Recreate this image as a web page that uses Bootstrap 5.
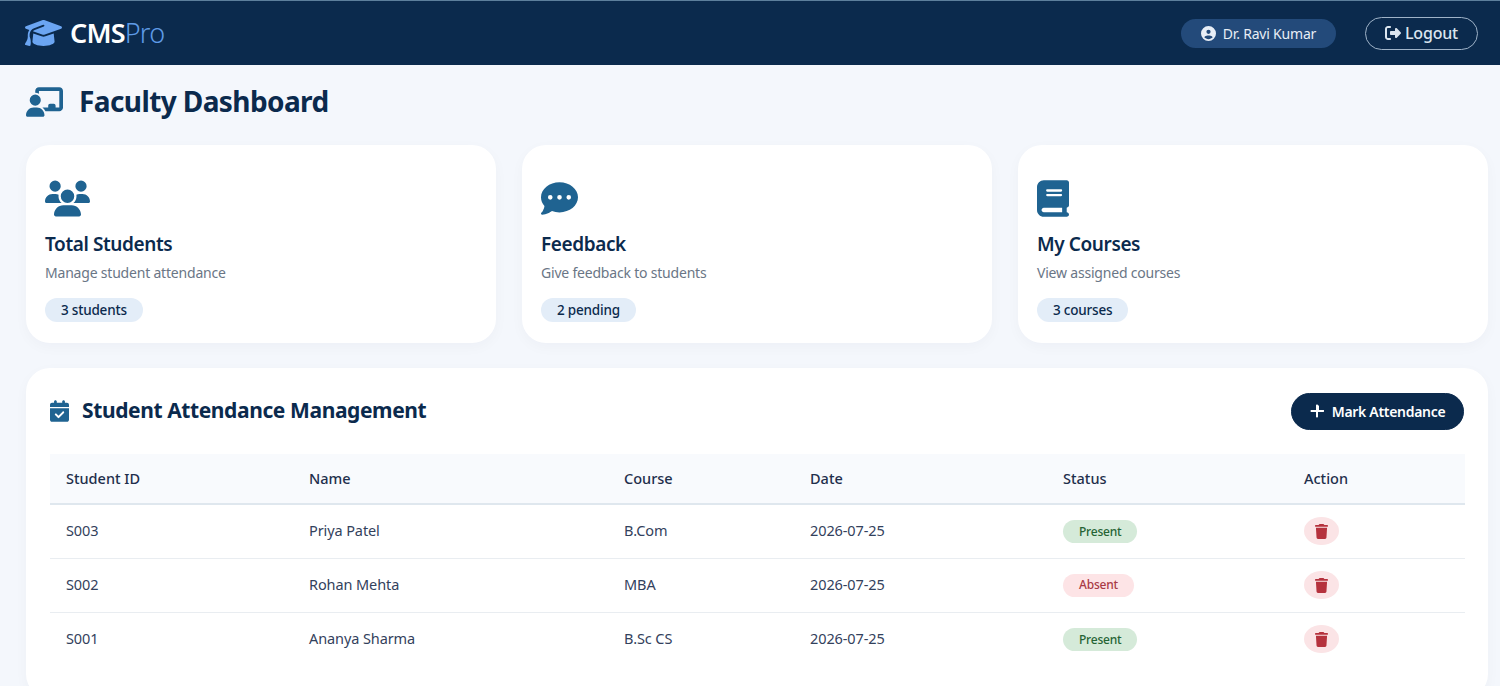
<!DOCTYPE html>
<html lang="en">
<head>
    <meta charset="UTF-8">
    <meta name="viewport" content="width=device-width, initial-scale=1.0">
    <title>Faculty Dashboard - CMSPro</title>
    <link href="https://cdn.jsdelivr.net/npm/bootstrap@5.3.0/dist/css/bootstrap.min.css" rel="stylesheet">
    <style>
        html, body { height: 100vh; overflow: hidden; }
        body {
            font-family: "Noto Sans", "Open Sans", sans-serif;
            background: #f4f7fc;
            color: #0b2a4d;
        }
        .ico { fill: currentColor; display: block; flex: none; }
        .cms-nav {
            height: 65px;
            background: #0b2a4d;
            border-top: 1px solid #5d7f9c;
            padding: 0 22px 0 25px;
        }
        .cms-logo { color: #fff; font-size: 27px; font-weight: 600; letter-spacing: -.8px; gap: 8px; text-decoration: none; }
        .cms-logo .ico { color: #6ba5f2; }
        .cms-logo span span { color: #5f9be6; font-weight: 300; }
        .user-pill {
            height: 29px;
            width: 155px;
            background: #234a7a;
            color: #e8eef6;
            font-size: 14px;
            gap: 7px;
            margin-right: 29px;
            letter-spacing: -.2px;
        }
        .btn-logout {
            --bs-btn-color: #dbe5ef;
            --bs-btn-border-color: #9fb3c8;
            --bs-btn-hover-color: #fff;
            --bs-btn-hover-border-color: #fff;
            --bs-btn-hover-bg: transparent;
            --bs-btn-border-radius: 17px;
            width: 113px;
            height: 33px;
            padding: 0;
            font-size: 16px;
            font-weight: 500;
            gap: 4px;
            letter-spacing: -.2px;
        }
        .page-wrap { padding: 0 12px 0 26px; }
        .page-title { height: 80px; gap: 16px; margin: 0; font-size: 28px; font-weight: 700; letter-spacing: -.6px; padding-bottom: 6px; }
        .page-title .ico, .stat-ico, .panel-title .ico { color: #1f6391; }
        .stat-row { --bs-gutter-x: 26px; margin-bottom: 25px; }
        .stat-box {
            height: 198px;
            background: #fff;
            border: 0;
            border-radius: 24px;
            padding: 35px 19px 0;
            box-shadow: 0 4px 14px rgba(11, 42, 77, .03);
        }
        .stat-ico { height: 37px; margin-bottom: 14px; }
        .stat-box h5 { font-size: 19px; font-weight: 600; letter-spacing: -.4px; margin: 0 0 5px; line-height: 26px; color: #0b2a4d; }
        .stat-box p { font-size: 14px; color: #6a7686; margin: 0 0 14px; line-height: 21px; letter-spacing: -.2px; }
        .stat-tag {
            height: 24px;
            padding: 0 16px;
            background: #e3edf8;
            color: #0b2a4d;
            font-size: 13.5px;
            font-weight: 500;
            letter-spacing: -.2px;
        }
        .panel-box {
            height: 330px;
            background: #fff;
            border: 0;
            border-radius: 24px;
            padding: 24px 24px 0;
            box-shadow: 0 4px 14px rgba(11, 42, 77, .03);
        }
        .panel-head { height: 62px; margin-bottom: 0; padding-bottom: 24px; height: 62px; }
        .panel-title { font-size: 21px; font-weight: 700; margin: 0; gap: 13px; letter-spacing: -.4px; padding-left: 0; }
        .btn-mark {
            --bs-btn-bg: #0b2a4d;
            --bs-btn-color: #fff;
            --bs-btn-border-color: #0b2a4d;
            --bs-btn-hover-bg: #16406f;
            --bs-btn-hover-border-color: #16406f;
            --bs-btn-hover-color: #fff;
            --bs-btn-border-radius: 19px;
            width: 173px;
            height: 37px;
            padding: 0;
            font-size: 14px;
            font-weight: 600;
            gap: 8px;
            letter-spacing: -.3px;
        }
        .att-table { table-layout: fixed; margin: 0; width: 1415px; --bs-table-color: #33415c; color: #33415c; }
        .att-table th {
            height: 50px;
            padding: 0 16px;
            background: #f8fafd;
            border-bottom: 2px solid #dfe7ee;
            font-size: 14.5px;
            font-weight: 500;
            color: #1f2f4c;
            vertical-align: middle;
        }
        .att-table td {
            height: 54px;
            padding: 0 16px;
            font-size: 14.5px;
            color: #33415c;
            vertical-align: middle;
            border-bottom: 1px solid #e9edf1;
            letter-spacing: -.1px;
        }
        .att-table tr:last-child td { border-bottom: 0; }
        .c-id { width: 243px; } .c-name { width: 315px; } .c-course { width: 186px; }
        .c-date { width: 253px; } .c-status { width: 241px; } .c-act { width: 177px; }
        .state-tag { height: 23px; padding: 0 16px; font-size: 12px; font-weight: 500; letter-spacing: -.2px; }
        .state-ok { background: #d5ead9; color: #256435; }
        .state-no { background: #fde4e6; color: #a93a45; }
        .btn-del {
            --bs-btn-bg: #fbe4e6;
            --bs-btn-color: #b5323d;
            --bs-btn-border-color: transparent;
            --bs-btn-hover-bg: #f6cfd3;
            --bs-btn-hover-color: #b5323d;
            --bs-btn-hover-border-color: transparent;
            --bs-btn-border-radius: 50%;
            width: 35px;
            height: 28px;
            padding: 0;
        }
    </style>
</head>
<body>
    <svg width="0" height="0" class="position-absolute">
        <symbol id="i-cap" viewBox="0 0 640 512"><path d="M320 32c-8.1 0-16.1 1.4-23.7 4.1L15.8 137.4C6.3 140.9 0 149.9 0 160s6.3 19.1 15.8 22.6l57.9 20.9C57.3 229.3 48 259.8 48 291.9v28.1c0 28.4-10.8 57.7-22.3 80.8c-6.5 13-13.9 25.8-22.5 37.6C0 442.7-.9 448.3 .9 453.4s6 8.9 11.2 10.2l64 16c4.2 1.1 8.7 .3 12.4-2s6.3-6.1 7.1-10.4c8.6-42.8 4.3-81.2-2.1-108.7C90.3 344.3 86 329.8 80 316.5V291.9c0-30.2 10.2-58.7 27.9-81.5c12.9-15.5 29.6-28 49.2-35.7l157-61.7c8.2-3.2 17.5 .8 20.7 9s-.8 17.5-9 20.7l-157 61.7c-12.4 4.9-23.3 12.4-32.2 21.6l159.6 57.6c7.6 2.7 15.6 4.1 23.7 4.1s16.1-1.4 23.7-4.1L624.2 182.6c9.5-3.4 15.8-12.5 15.8-22.6s-6.3-19.1-15.8-22.6L343.7 36.1C336.1 33.4 328.1 32 320 32zM128 408c0 35.3 86 72 192 72s192-36.7 192-72L496.7 262.6 354.5 314c-11.1 4-22.8 6-34.5 6s-23.5-2-34.5-6L143.3 262.6 128 408z"/></symbol>
        <symbol id="i-board" viewBox="0 0 640 512"><path d="M160 64c0-35.3 28.7-64 64-64H576c35.3 0 64 28.7 64 64V352c0 35.3-28.7 64-64 64H336.8c-11.8-25.5-29.9-47.5-52.4-64H384V320c0-17.7 14.3-32 32-32h64c17.7 0 32 14.3 32 32v32h64V64L224 64v49.1C205.2 102.2 183.3 96 160 96V64zm0 64a96 96 0 1 1 0 192 96 96 0 1 1 0-192zM133.3 352h53.3C260.3 352 320 411.7 320 485.3c0 14.7-11.9 26.7-26.7 26.7H26.7C11.9 512 0 500.1 0 485.3C0 411.7 59.7 352 133.3 352z"/></symbol>
        <symbol id="i-users" viewBox="0 0 640 512"><path d="M144 0a80 80 0 1 1 0 160A80 80 0 1 1 144 0zM512 0a80 80 0 1 1 0 160A80 80 0 1 1 512 0zM0 298.7C0 239.8 47.8 192 106.7 192h42.7c15.9 0 31 3.5 44.6 9.7c-1.3 7.2-1.9 14.7-1.9 22.3c0 38.2 16.8 72.5 43.3 96c-.2 0-.4 0-.7 0H21.3C9.6 320 0 310.4 0 298.7zM405.3 320c-.2 0-.4 0-.7 0c26.6-23.5 43.3-57.8 43.3-96c0-7.6-.7-15-1.9-22.3c13.6-6.3 28.7-9.7 44.6-9.7h42.7C592.2 192 640 239.8 640 298.7c0 11.8-9.6 21.3-21.3 21.3H405.3zM224 224a96 96 0 1 1 192 0 96 96 0 1 1 -192 0zM128 485.3C128 411.7 187.7 352 261.3 352H378.7C452.3 352 512 411.7 512 485.3c0 14.7-11.9 26.7-26.7 26.7H154.7c-14.7 0-26.7-11.9-26.7-26.7z"/></symbol>
        <symbol id="i-dots" viewBox="0 0 512 512"><path d="M256 448c141.4 0 256-93.1 256-208S397.4 32 256 32S0 125.1 0 240c0 45.1 17.7 86.8 47.7 120.9c-1.9 24.5-11.4 46.3-21.4 62.9c-5.5 9.2-11.1 16.6-15.2 21.6c-2.1 2.5-3.7 4.4-4.9 5.7c-.6 .6-1 1.1-1.3 1.4l-.3 .3c-4.6 4.6-5.9 11.4-3.4 17.4c2.5 6 8.3 9.9 14.8 9.9c28.7 0 57.6-8.9 81.6-19.3c22.9-10 42.4-21.9 54.3-30.6c31.8 11.5 67 17.9 104.1 17.9zM128 208a32 32 0 1 1 0 64 32 32 0 1 1 0-64zm128 0a32 32 0 1 1 0 64 32 32 0 1 1 0-64zm96 32a32 32 0 1 1 64 0 32 32 0 1 1 -64 0z"/></symbol>
        <symbol id="i-book" viewBox="0 0 448 512"><path d="M96 0C43 0 0 43 0 96V416c0 53 43 96 96 96H384h32c17.7 0 32-14.3 32-32s-14.3-32-32-32V384c17.7 0 32-14.3 32-32V32c0-17.7-14.3-32-32-32H384 96zm0 384H352v64H96c-17.7 0-32-14.3-32-32s14.3-32 32-32zm32-240c0-8.8 7.2-16 16-16H336c8.8 0 16 7.2 16 16s-7.2 16-16 16H144c-8.8 0-16-7.2-16-16zm16 48H336c8.8 0 16 7.2 16 16s-7.2 16-16 16H144c-8.8 0-16-7.2-16-16s7.2-16 16-16z"/></symbol>
        <symbol id="i-cal" viewBox="0 0 448 512"><path d="M128 0c17.7 0 32 14.3 32 32V64H288V32c0-17.7 14.3-32 32-32s32 14.3 32 32V64h48c26.5 0 48 21.5 48 48v48H0V112C0 85.5 21.5 64 48 64H96V32c0-17.7 14.3-32 32-32zM0 192H448V464c0 26.5-21.5 48-48 48H48c-26.5 0-48-21.5-48-48V192zM329 305c9.4-9.4 9.4-24.6 0-33.9s-24.6-9.4-33.9 0l-95 95-47-47c-9.4-9.4-24.6-9.4-33.9 0s-9.4 24.6 0 33.9l64 64c9.4 9.4 24.6 9.4 33.9 0L329 305z"/></symbol>
        <symbol id="i-user" viewBox="0 0 512 512"><path d="M399 384.2C376.9 345.8 335.4 320 288 320H224c-47.4 0-88.9 25.8-111 64.2c35.2 39.2 86.2 63.8 143 63.8s107.8-24.7 143-63.8zM0 256a256 256 0 1 1 512 0A256 256 0 1 1 0 256zm256 16a72 72 0 1 0 0-144 72 72 0 1 0 0 144z"/></symbol>
        <symbol id="i-out" viewBox="0 0 512 512"><path d="M377.9 105.9L500.7 228.7c7.2 7.2 11.3 17.1 11.3 27.3s-4.1 20.1-11.3 27.3L377.9 406.1c-6.4 6.4-15 9.9-24 9.9c-18.7 0-33.9-15.2-33.9-33.9l0-62.1-128 0c-17.7 0-32-14.3-32-32l0-64c0-17.7 14.3-32 32-32l128 0 0-62.1c0-18.7 15.2-33.9 33.9-33.9c9 0 17.6 3.6 24 9.9zM160 96L96 96c-17.7 0-32 14.3-32 32l0 256c0 17.7 14.3 32 32 32l64 0c17.7 0 32 14.3 32 32s-14.3 32-32 32l-64 0c-53 0-96-43-96-96L0 128C0 75 43 32 96 32l64 0c17.7 0 32 14.3 32 32s-14.3 32-32 32z"/></symbol>
        <symbol id="i-trash" viewBox="0 0 448 512"><path d="M135.2 17.7L128 32H32C14.3 32 0 46.3 0 64S14.3 96 32 96H416c17.7 0 32-14.3 32-32s-14.3-32-32-32H320l-7.2-14.3C307.4 6.8 296.3 0 284.2 0H163.8c-12.1 0-23.2 6.8-28.6 17.7zM416 128H32L53.2 467c1.6 25.3 22.6 45 47.9 45H346.9c25.3 0 46.3-19.7 47.9-45L416 128z"/></symbol>
        <symbol id="i-plus" viewBox="0 0 448 512"><path d="M256 80c0-17.7-14.3-32-32-32s-32 14.3-32 32V224H48c-17.7 0-32 14.3-32 32s14.3 32 32 32H192V432c0 17.7 14.3 32 32 32s32-14.3 32-32V288H432c17.7 0 32-14.3 32-32s-14.3-32-32-32H288V80z"/></symbol>
    </svg>

    <nav class="navbar cms-nav d-flex align-items-center justify-content-between">
        <a class="cms-logo d-flex align-items-center" href="#">
            <svg class="ico" width="37" height="30"><use href="#i-cap"/></svg>
            <span>CMS<span>Pro</span></span>
        </a>
        <div class="d-flex align-items-center">
            <div class="user-pill rounded-pill d-flex align-items-center justify-content-center">
                <svg class="ico" width="15" height="15"><use href="#i-user"/></svg>
                Dr. Ravi Kumar
            </div>
            <button class="btn btn-logout d-flex align-items-center justify-content-center">
                <svg class="ico" width="16" height="16"><use href="#i-out"/></svg>
                Logout
            </button>
        </div>
    </nav>

    <div class="page-wrap">
        <h1 class="page-title d-flex align-items-center">
            <svg class="ico" width="37" height="30"><use href="#i-board"/></svg>
            Faculty Dashboard
        </h1>

        <div class="row stat-row">
            <div class="col-4">
                <div class="card stat-box">
                    <svg class="ico stat-ico" width="45" viewBox="0 0 45 37"><use href="#i-users"/></svg>
                    <h5>Total Students</h5>
                    <p>Manage student attendance</p>
                    <div><span class="stat-tag rounded-pill d-inline-flex align-items-center">3 students</span></div>
                </div>
            </div>
            <div class="col-4">
                <div class="card stat-box">
                    <svg class="ico stat-ico" width="37" viewBox="0 0 37 37"><use href="#i-dots"/></svg>
                    <h5>Feedback</h5>
                    <p>Give feedback to students</p>
                    <div><span class="stat-tag rounded-pill d-inline-flex align-items-center">2 pending</span></div>
                </div>
            </div>
            <div class="col-4">
                <div class="card stat-box">
                    <svg class="ico stat-ico" width="32" viewBox="0 0 32 37"><use href="#i-book"/></svg>
                    <h5>My Courses</h5>
                    <p>View assigned courses</p>
                    <div><span class="stat-tag rounded-pill d-inline-flex align-items-center">3 courses</span></div>
                </div>
            </div>
        </div>

        <div class="card panel-box">
            <div class="panel-head d-flex align-items-center justify-content-between">
                <h2 class="panel-title d-flex align-items-center">
                    <svg class="ico" width="19" height="22"><use href="#i-cal"/></svg>
                    Student Attendance Management
                </h2>
                <button class="btn btn-mark d-flex align-items-center justify-content-center">
                    <svg class="ico" width="14" height="16"><use href="#i-plus"/></svg>
                    Mark Attendance
                </button>
            </div>
            <table class="table att-table">
                <colgroup>
                    <col class="c-id"><col class="c-name"><col class="c-course"><col class="c-date"><col class="c-status"><col class="c-act">
                </colgroup>
                <thead>
                    <tr><th>Student ID</th><th>Name</th><th>Course</th><th>Date</th><th>Status</th><th>Action</th></tr>
                </thead>
                <tbody id="attendanceBody"></tbody>
            </table>
        </div>
    </div>

    <script src="https://cdn.jsdelivr.net/npm/bootstrap@5.3.0/dist/js/bootstrap.bundle.min.js"></script>
    <script>
        const records = [
            { id: 'S003', name: 'Priya Patel', course: 'B.Com', date: '2026-07-25', status: 'Present' },
            { id: 'S002', name: 'Rohan Mehta', course: 'MBA', date: '2026-07-25', status: 'Absent' },
            { id: 'S001', name: 'Ananya Sharma', course: 'B.Sc CS', date: '2026-07-25', status: 'Present' }
        ];
        const body = document.getElementById('attendanceBody');
        records.forEach(r => {
            const row = document.createElement('tr');
            row.innerHTML = `
                <td>${r.id}</td>
                <td>${r.name}</td>
                <td>${r.course}</td>
                <td>${r.date}</td>
                <td><span class="state-tag rounded-pill d-inline-flex align-items-center ${r.status === 'Present' ? 'state-ok' : 'state-no'}">${r.status}</span></td>
                <td><button class="btn btn-del d-flex align-items-center justify-content-center"><svg class="ico" width="13" height="15"><use href="#i-trash"/></svg></button></td>
            `;
            body.appendChild(row);
        });
    </script>
</body>
</html>
